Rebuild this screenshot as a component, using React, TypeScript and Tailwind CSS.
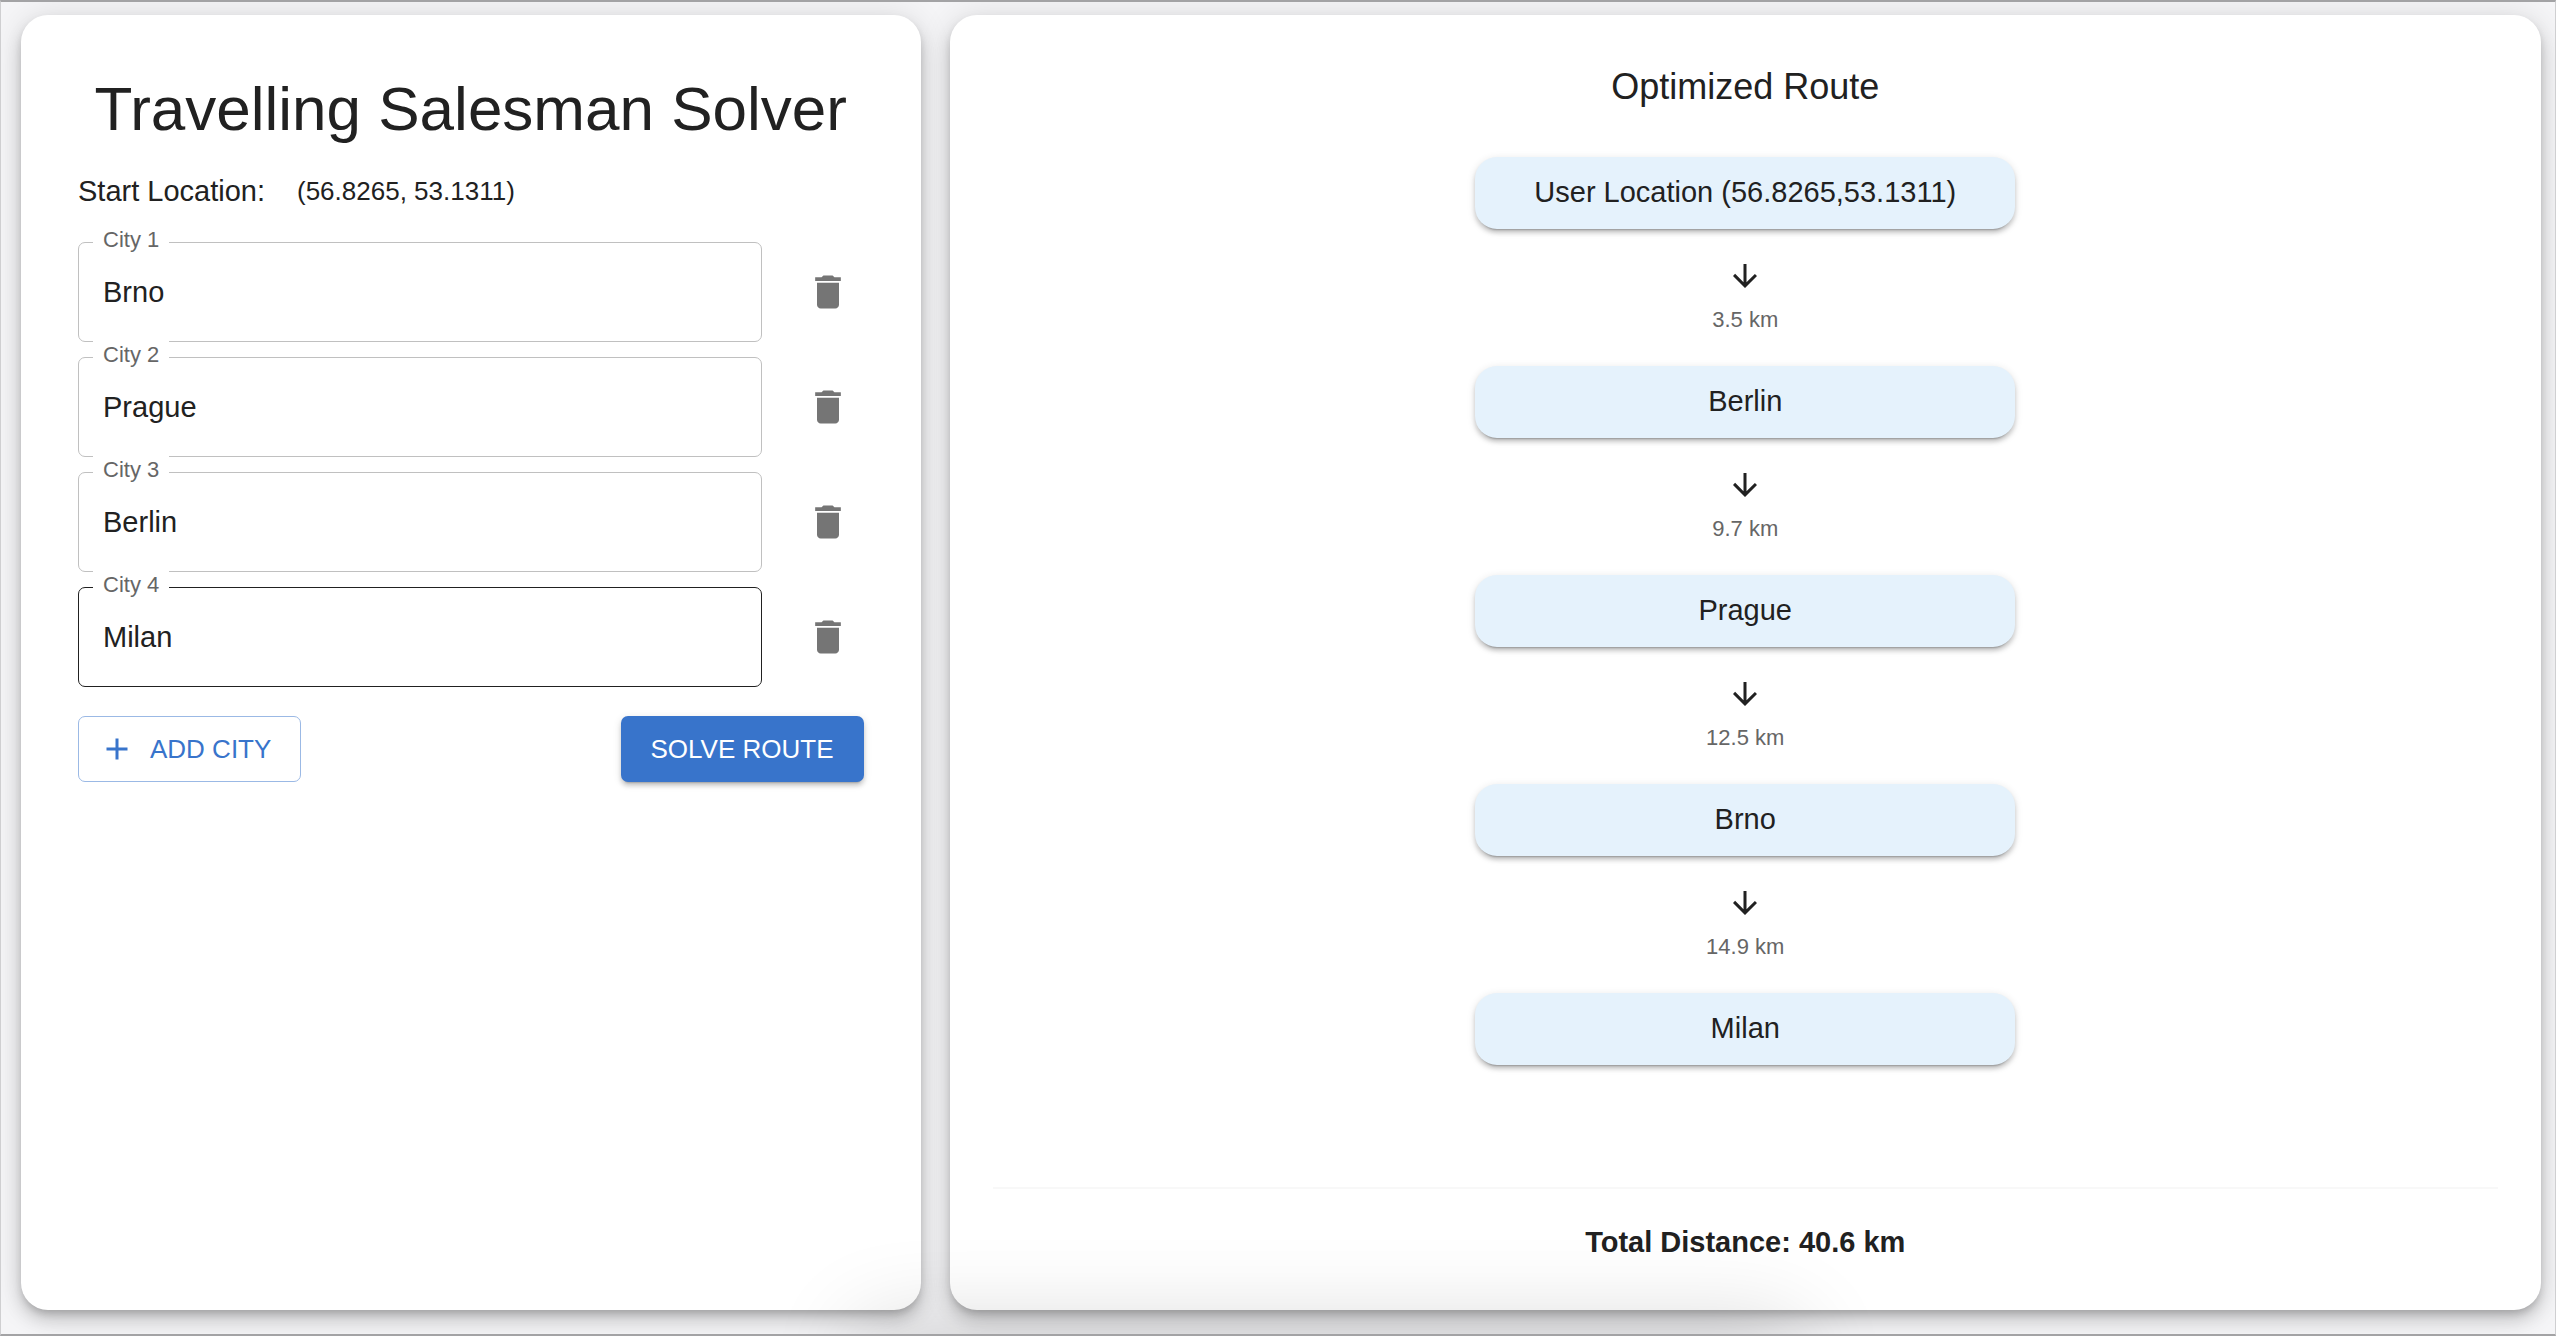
import { useId, useState } from "react";

const initialCities = ["Brno", "Prague", "Berlin", "Milan"];

const stops = [
  { name: "User Location (56.8265,53.1311)", distance: "3.5 km" },
  { name: "Berlin", distance: "9.7 km" },
  { name: "Prague", distance: "12.5 km" },
  { name: "Brno", distance: "14.9 km" },
  { name: "Milan", distance: null },
];

const cardClass =
  "flex flex-col rounded-[27px] bg-white shadow-[0_5px_9px_-2px_rgba(0,0,0,0.2),0_11px_18px_0_rgba(0,0,0,0.14),0_2px_32px_0_rgba(0,0,0,0.12)]";

function DeleteIcon() {
  return (
    <svg viewBox="0 0 24 24" className="size-11" fill="currentColor" aria-hidden="true">
      <path d="M6 19c0 1.1.9 2 2 2h8c1.1 0 2-.9 2-2V7H6zM19 4h-3.5l-1-1h-5l-1 1H5v2h14z" />
    </svg>
  );
}

function AddIcon() {
  return (
    <svg viewBox="0 0 24 24" className="size-9" fill="currentColor" aria-hidden="true">
      <path d="M19 13h-6v6h-2v-6H5v-2h6V5h2v6h6z" />
    </svg>
  );
}

function ArrowDownIcon() {
  return (
    <svg viewBox="0 0 24 24" className="size-9" fill="currentColor" aria-hidden="true">
      <path d="m20 12-1.41-1.41L13 16.17V4h-2v12.17l-5.58-5.59L4 12l8 8z" />
    </svg>
  );
}

type CityFieldProps = {
  label: string;
  value: string;
  active: boolean;
  onChange: (value: string) => void;
  onDelete: () => void;
};

function CityField({ label, value, active, onChange, onDelete }: CityFieldProps) {
  const id = useId();
  return (
    <div className="flex items-center gap-[30px]">
      <div className="relative min-w-0 flex-1">
        <label
          htmlFor={id}
          className="absolute -top-4 left-[15px] bg-white px-[10px] text-[22px] leading-7 text-[#666]"
        >
          {label}
        </label>
        <input
          id={id}
          type="text"
          value={value}
          onChange={(e) => onChange(e.target.value)}
          className={
            active
              ? "block h-[100px] w-full rounded-[7px] border border-[#212121] bg-transparent px-6 text-[29px] outline-none"
              : "block h-[100px] w-full rounded-[7px] border border-[#c0c0c0] bg-transparent px-6 text-[29px] outline-none hover:border-[#212121]"
          }
        />
      </div>
      <button
        type="button"
        onClick={onDelete}
        aria-label={`Delete ${label}`}
        className="flex size-[72px] items-center justify-center rounded-full text-[#757575]"
      >
        <DeleteIcon />
      </button>
    </div>
  );
}

export default function App() {
  const [cities, setCities] = useState(initialCities);

  return (
    <div className="relative grid min-h-screen grid-cols-[13fr_23fr] gap-[29px] overflow-hidden border-x border-y-2 border-x-[#cfcfd1] border-y-[#a3a3a5] bg-[#f5f5f7] pt-[13px] pr-[14px] pb-6 pl-5 font-['Liberation_Sans',Arial,sans-serif] text-[#212121]">
      <section className={`${cardClass} px-[57px] pt-14`}>
        <h1 className="text-center text-[62px] leading-[75px] whitespace-nowrap">
          Travelling Salesman Solver
        </h1>
        <div className="mt-6 flex items-center gap-8">
          <p className="text-[29px] leading-[43px]">Start Location:</p>
          <p className="text-[26px] leading-[43px]">(56.8265, 53.1311)</p>
        </div>
        <div className="mt-[29px] flex flex-col gap-[15px]">
          {cities.map((city, i) => (
            <CityField
              key={i}
              label={`City ${i + 1}`}
              value={city}
              active={i === 3}
              onChange={(value) => setCities(cities.map((c, j) => (j === i ? value : c)))}
              onDelete={() => setCities(cities.filter((_, j) => j !== i))}
            />
          ))}
        </div>
        <div className="mt-[29px] flex items-center justify-between">
          <button
            type="button"
            onClick={() => setCities([...cities, ""])}
            className="flex h-[66px] items-center gap-[15px] rounded-[7px] border border-[#9bb9e5] pr-[29px] pl-5 text-[26px] text-[#3874cb]"
          >
            <AddIcon />
            ADD CITY
          </button>
          <button
            type="button"
            className="h-[66px] rounded-[7px] bg-[#3874cb] px-[30px] text-[26px] text-white shadow-[0_5px_2px_-4px_rgba(0,0,0,0.2),0_4px_4px_0_rgba(0,0,0,0.14),0_2px_9px_0_rgba(0,0,0,0.12)]"
          >
            SOLVE ROUTE
          </button>
        </div>
      </section>

      <section className={`${cardClass} px-[43px] pt-[43px] pb-[45px]`}>
        <h2 className="text-center text-[36px] leading-[57px]">Optimized Route</h2>
        <ol className="mt-[42px] flex flex-1 flex-col items-center">
          {stops.map((stop) => (
            <li key={stop.name} className="flex flex-col items-center">
              <div className="flex h-[72px] w-[540px] items-center justify-center rounded-[22px] bg-[#e5f2fc] text-[29px] shadow-[0_5px_2px_-4px_rgba(0,0,0,0.25),0_4px_4px_0_rgba(0,0,0,0.16),0_2px_9px_0_rgba(0,0,0,0.12)]">
                {stop.name}
              </div>
              {stop.distance && (
                <div className="flex flex-col items-center pt-[29px] pb-[29px]">
                  <ArrowDownIcon />
                  <span className="mt-2 text-[22px] leading-[35px] text-[#666]">
                    {stop.distance}
                  </span>
                </div>
              )}
            </li>
          ))}
        </ol>
        <div className="border-t-2 border-[#f8f8f8] pt-[30px] text-center text-[29px] leading-[46px] font-bold">
          Total Distance: 40.6 km
        </div>
      </section>

      <div className="pointer-events-none absolute top-full left-[34%] h-20 w-[36%] shadow-[0_0_90px_10px_rgba(0,0,0,0.16)]" />
    </div>
  );
}
